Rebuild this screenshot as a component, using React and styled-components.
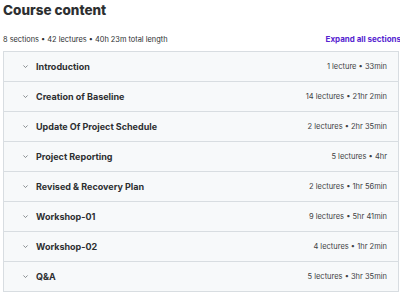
import React from "react";
import styled, { createGlobalStyle } from "styled-components";

const Global = createGlobalStyle`
  html, body { margin: 0; padding: 0; background: #fff; }
  body { font-family: Inter, "Noto Sans", sans-serif; color: #2d2f31; }
`;

const Page = styled.div`
  padding: 1px 1px 0 3px;
  width: 400px;
  box-sizing: border-box;
`;

const Title = styled.h2`
  margin: 0;
  font-size: 13.5px;
  font-weight: 800;
  line-height: 19px;
`;

const Meta = styled.div`
  display: flex;
  justify-content: space-between;
  align-items: center;
  margin-top: 14px;
  height: 10px;
  margin-right: -2px;
`;

const Summary = styled.span`
  font-size: 7.4px;
  color: #2d2f31;
`;

const Expand = styled.span`
  font-size: 8px;
  font-weight: 700;
  color: #5624d0;
  white-space: nowrap;
`;

const List = styled.div`
  margin-top: 7px;
  border: 1px solid #d8dde1;
  border-bottom: none;
`;

const Row = styled.div`
  display: flex;
  align-items: center;
  height: 29px;
  background: #f7f9fa;
  border-bottom: 1px solid #d8dde1;
  padding: 0 11px 0 18px;
`;

const Chevron = styled.svg`
  width: 7px;
  height: 7px;
  flex: none;
  margin-right: 7px;
  color: #6a6f73;
`;

const Name = styled.span`
  flex: 1;
  font-size: 9px;
  font-weight: 700;
  color: #2d2f31;
`;

const Info = styled.span`
  font-size: 7.5px;
  color: #3e4143;
`;

const sections = [
  ["Introduction", "1 lecture • 33min"],
  ["Creation of Baseline", "14 lectures • 21hr 2min"],
  ["Update Of Project Schedule", "2 lectures • 2hr 35min"],
  ["Project Reporting", "5 lectures • 4hr"],
  ["Revised & Recovery Plan", "2 lectures • 1hr 56min"],
  ["Workshop-01", "9 lectures • 5hr 41min"],
  ["Workshop-02", "4 lectures • 1hr 2min"],
  ["Q&A", "5 lectures • 3hr 35min"],
];

export default function App() {
  return (
    <>
      <Global />
      <Page>
        <Title>Course content</Title>
        <Meta>
          <Summary>8 sections • 42 lectures • 40h 23m total length</Summary>
          <Expand>Expand all sections</Expand>
        </Meta>
        <List>
          {sections.map(([n, i]) => (
            <Row key={n}>
              <Chevron viewBox="0 0 10 10">
                <path d="M2 3.5 L5 6.5 L8 3.5" fill="none" stroke="currentColor" strokeWidth="1.1" />
              </Chevron>
              <Name>{n}</Name>
              <Info>{i}</Info>
            </Row>
          ))}
        </List>
      </Page>
    </>
  );
}
